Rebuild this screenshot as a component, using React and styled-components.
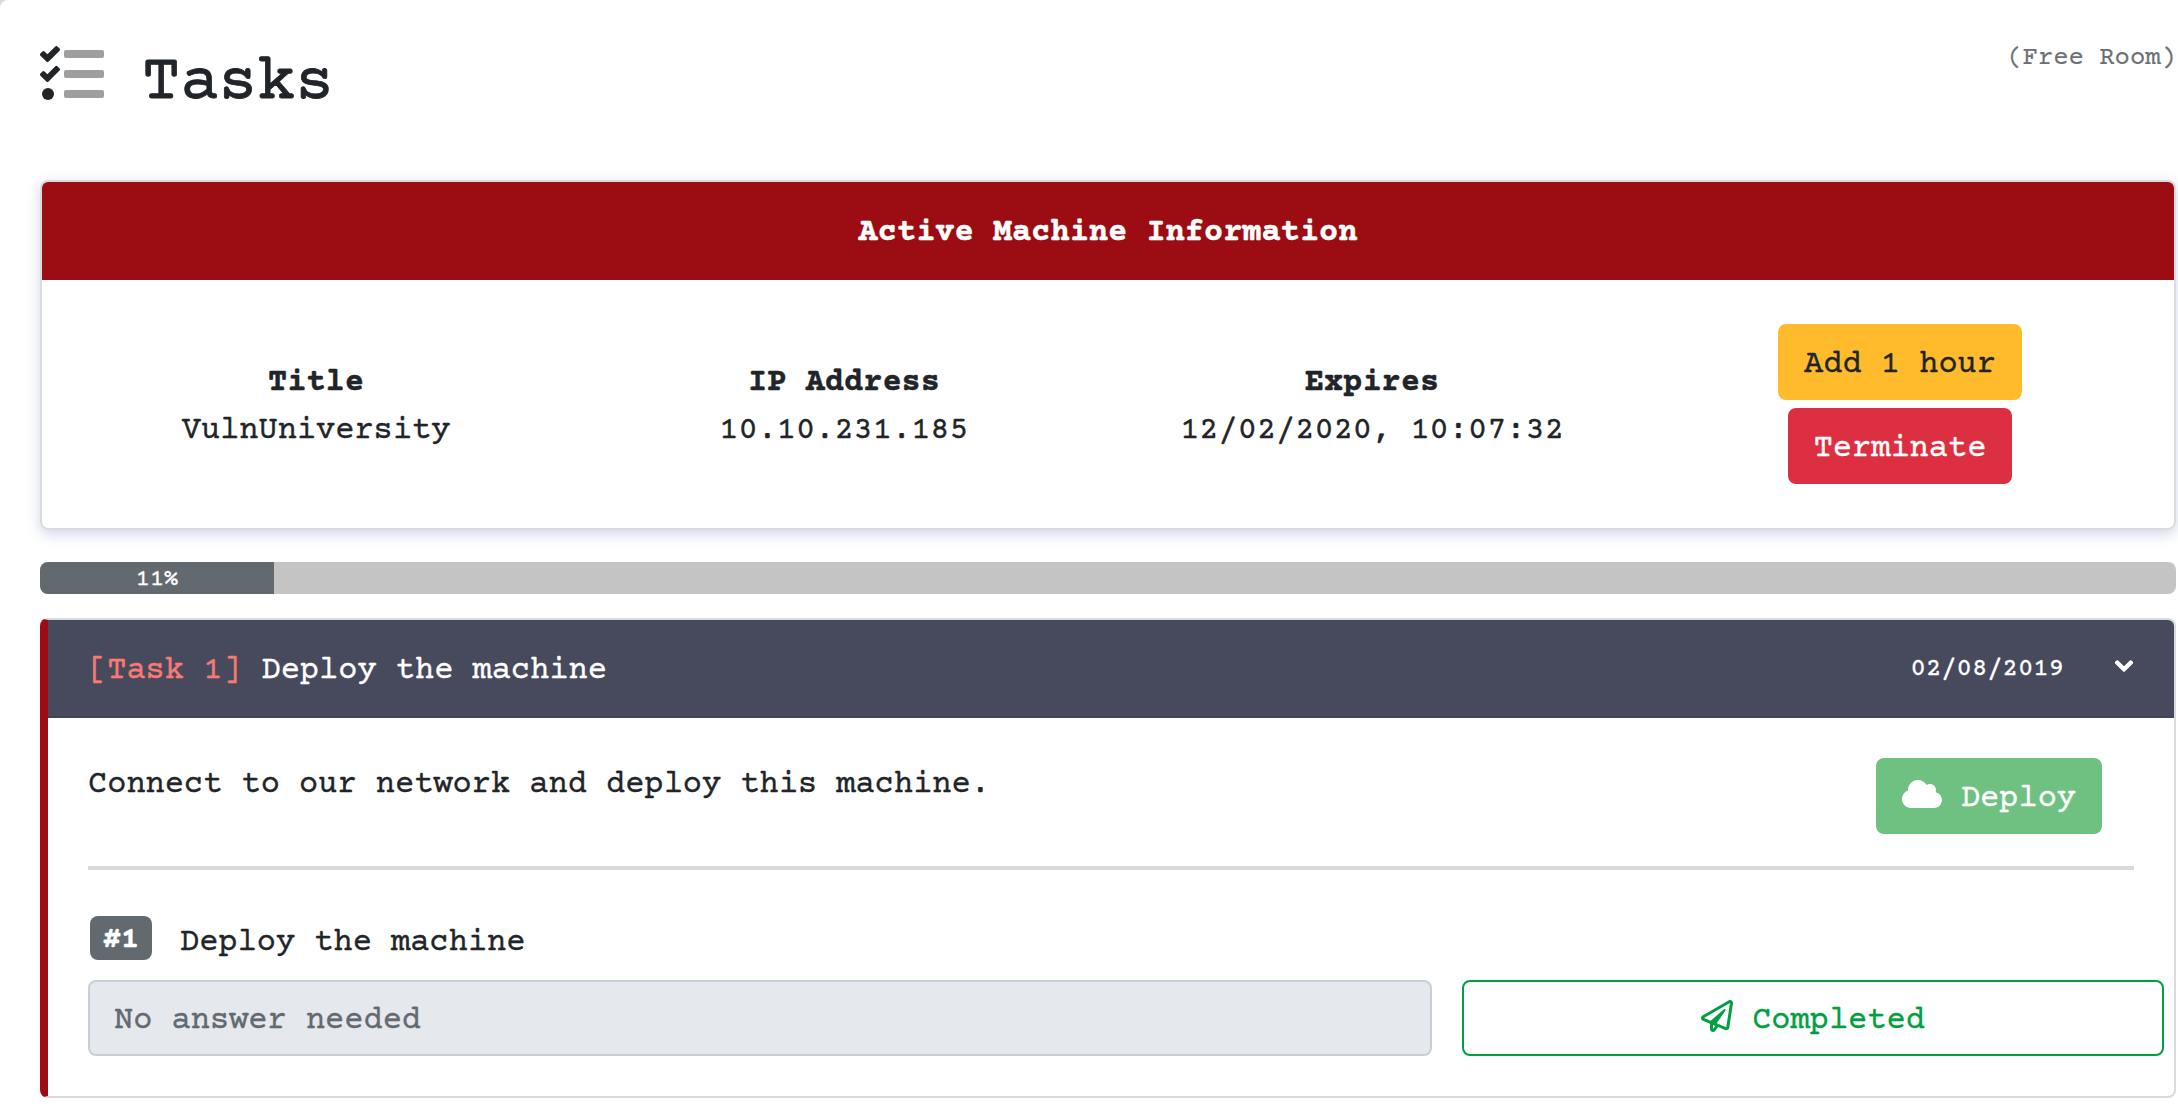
import React from 'react';
import styled, { createGlobalStyle } from 'styled-components';
import { FaCloud, FaChevronDown, FaRegPaperPlane } from 'react-icons/fa';

const Global = createGlobalStyle`
  *, *::before, *::after { box-sizing: border-box; }
  html { background: #d9d9d9; }
  body {
    margin: 0;
    font-family: "Courier Prime", "Liberation Mono", monospace;
    font-size: 32px;
    line-height: 48px;
    color: #212529;
    overflow: hidden;
    -webkit-text-stroke: 0.4px currentColor;
  }
`;

const Panel = styled.main`
  height: 1118px;
  padding: 32px 2px 0 40px;
  background: #fff;
  border-top-left-radius: 8px;
`;

const Header = styled.header`
  display: flex;
  justify-content: space-between;
  align-items: flex-start;
  height: 148px;
`;

const Heading = styled.h1`
  display: flex;
  gap: 38px;
  margin: 0;
  font-size: 64px;
  font-weight: 400;
  line-height: 104px;
  svg { flex: none; margin-top: 8px; }
  span { -webkit-text-stroke: 0.8px currentColor; }
`;

const RoomType = styled.span`
  padding-top: 3px;
  font-size: 25.6px;
  color: #6c7073;
  -webkit-text-stroke: 0.2px currentColor;
`;

const MachineCard = styled.section`
  height: 350px;
  border: 2px solid #dadbdd;
  border-radius: 8px;
  box-shadow: 0 4px 14px rgba(60, 85, 150, 0.24);
  overflow: hidden;
`;

const MachineHeader = styled.div`
  height: 98px;
  padding-top: 27px;
  background: #9b0d12;
  color: #fff;
  font-weight: 700;
  text-align: center;
`;

const MachineBody = styled.div`
  display: grid;
  grid-template-columns: repeat(4, 1fr);
  padding: 44px 10px 0;
  text-align: center;
`;

const Fact = styled.div`
  display: flex;
  flex-direction: column;
  padding-top: 35px;
`;

const Actions = styled.div`
  display: flex;
  flex-direction: column;
  align-items: center;
  gap: 8px;
`;

const tones = {
  warning: ['#ffbb2c', '#ffbb2c', '#212529'],
  danger: ['#dc3042', '#dc3042', '#fff'],
  success: ['#6fc181', '#6fc181', '#fff'],
  outline: ['#fff', '#00a041', '#00a041'],
};

const Button = styled.button`
  display: inline-flex;
  align-items: center;
  justify-content: center;
  gap: 19px;
  height: 76px;
  padding: 6px 24px 0;
  border: 2px solid ${(p) => tones[p.$tone][1]};
  border-radius: 8px;
  background: ${(p) => tones[p.$tone][0]};
  color: ${(p) => tones[p.$tone][2]};
  font: inherit;
  -webkit-text-stroke: inherit;
  svg { flex: none; margin-top: -10px; }
`;

const CloudIcon = styled(FaCloud)`
  width: 40px;
  height: 32px;
`;

const Progress = styled.div`
  height: 32px;
  margin: 32px 0 24px;
  border-radius: 8px;
  background: #c4c4c4;
  overflow: hidden;
`;

const ProgressFill = styled.div`
  height: 100%;
  background: #626a70;
  color: #fff;
  font-size: 23.5px;
  line-height: 36px;
  text-align: center;
`;

const TaskCard = styled.section`
  height: 480px;
  border: 2px solid #dadada;
  border-left: 8px solid #9b0d12;
  border-radius: 8px;
  overflow: hidden;
`;

const TaskHeader = styled.div`
  display: flex;
  align-items: center;
  height: 98px;
  padding: 6px 40px 0;
  background: #464a5c;
  border-bottom: 2px solid #414455;
  color: #fff;
  svg {
    margin-top: -10px;
    overflow: visible;
    stroke: #fff;
    stroke-width: 30px;
    stroke-linejoin: round;
  }
`;

const TaskLabel = styled.span`
  margin-right: 20px;
  color: #f87a72;
`;

const TaskDate = styled.span`
  margin: -2px 50px 0 auto;
  font-size: 25.6px;
`;

const TaskBody = styled.div`
  padding: 40px 10px 0 40px;
`;

const Intro = styled.div`
  display: flex;
  justify-content: space-between;
  height: 108px;
  margin-right: 30px;
  padding-right: 32px;
`;

const IntroText = styled.p`
  margin: 3px 0 0;
`;

const Divider = styled.hr`
  height: 4px;
  margin: 0 30px 0 0;
  border: 0;
  background: #dadada;
`;

const Question = styled.div`
  display: flex;
  gap: 28px;
  padding: 46px 0 0 2px;
  height: 110px;
`;

const QuestionText = styled.span`
  padding-top: 3px;
`;

const Badge = styled.span`
  width: 62px;
  height: 44px;
  border-radius: 8px;
  background: #626a70;
  color: #fff;
  font-size: 30px;
  font-weight: 700;
  line-height: 49px;
  text-align: center;
`;

const AnswerRow = styled.div`
  display: grid;
  grid-template-columns: 1344px 1fr;
  gap: 30px;
`;

const Answer = styled.input`
  height: 76px;
  padding: 6px 24px 0;
  border: 2px solid #c7ced6;
  border-radius: 8px;
  background: #e5e8ed;
  font: inherit;
  -webkit-text-stroke: inherit;
  &::placeholder { color: #626a70; opacity: 1; -webkit-text-stroke: 0.4px #626a70; }
`;

const TasksIcon = () => (
  <svg width="64" height="64" viewBox="0 0 512 512" fill="currentColor">
    <g opacity="0.44">
      <rect x="192" y="80" width="320" height="64" rx="16" />
      <rect x="192" y="240" width="320" height="64" rx="16" />
      <rect x="192" y="400" width="320" height="64" rx="16" />
    </g>
    <path
      transform="translate(0 16)"
      d="M139.61 35.5a12 12 0 0 0-17 0L58.93 98.81l-22.7-22.12a12 12 0 0 0-17 0L3.53 92.41a12 12 0 0 0 0 17l47.59 47.4a12.78 12.78 0 0 0 17.61 0l15.59-15.62L156.52 69a12.09 12.09 0 0 0 .09-17zm0 159.19a12 12 0 0 0-17 0l-63.68 63.72-22.7-22.1a12 12 0 0 0-17 0L3.53 252a12 12 0 0 0 0 17L51 316.5a12.77 12.77 0 0 0 17.6 0l15.7-15.69 72.2-72.22a12 12 0 0 0 .09-16.9z"
    />
    <circle cx="64" cy="432" r="48" />
  </svg>
);

const facts = [
  ['Title', 'VulnUniversity'],
  ['IP Address', '10.10.231.185'],
  ['Expires', '12/02/2020, 10:07:32'],
];

const progress = 10.95;

export default function App() {
  return (
    <>
      <Global />
      <Panel>
        <Header>
          <Heading>
            <TasksIcon />
            <span>Tasks</span>
          </Heading>
          <RoomType>(Free Room)</RoomType>
        </Header>

        <MachineCard>
          <MachineHeader>Active Machine Information</MachineHeader>
          <MachineBody>
            {facts.map(([label, value]) => (
              <Fact key={label}>
                <strong>{label}</strong>
                <span>{value}</span>
              </Fact>
            ))}
            <Actions>
              <Button $tone="warning">Add 1 hour</Button>
              <Button $tone="danger">Terminate</Button>
            </Actions>
          </MachineBody>
        </MachineCard>

        <Progress>
          <ProgressFill style={{ width: `${progress}%` }}>{Math.round(progress)}%</ProgressFill>
        </Progress>

        <TaskCard>
          <TaskHeader>
            <TaskLabel>[Task 1]</TaskLabel>
            <span>Deploy the machine</span>
            <TaskDate>02/08/2019</TaskDate>
            <FaChevronDown size={20} />
          </TaskHeader>
          <TaskBody>
            <Intro>
              <IntroText>Connect to our network and deploy this machine.</IntroText>
              <Button $tone="success">
                <CloudIcon />
                Deploy
              </Button>
            </Intro>
            <Divider />
            <Question>
              <Badge>#1</Badge>
              <QuestionText>Deploy the machine</QuestionText>
            </Question>
            <AnswerRow>
              <Answer placeholder="No answer needed" disabled />
              <Button $tone="outline">
                <FaRegPaperPlane size={32} />
                Completed
              </Button>
            </AnswerRow>
          </TaskBody>
        </TaskCard>
      </Panel>
    </>
  );
}
